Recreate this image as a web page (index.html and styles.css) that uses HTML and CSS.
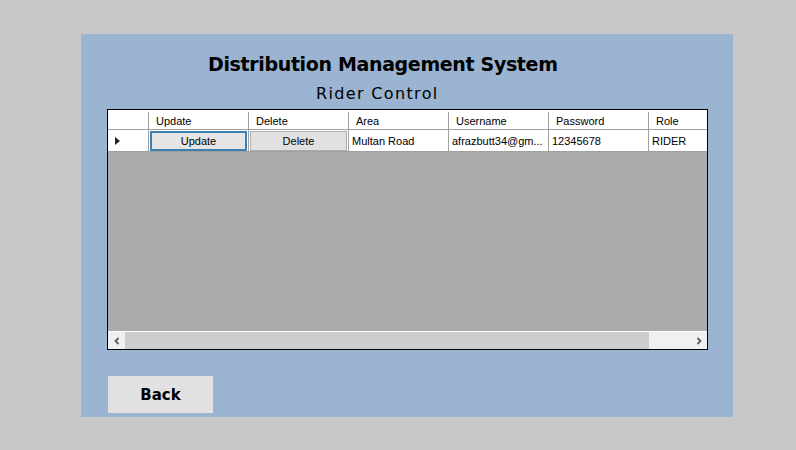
FILE: index.html
```html
<!DOCTYPE html>
<html>
<head>
<meta charset="utf-8">
<link rel="stylesheet" href="styles.css">
</head>
<body>
<div class="panel">
  <div class="titles">
    <h1 class="title">Distribution Management System</h1>
    <div class="subtitle">Rider Control</div>
  </div>
  <div class="grid">
    <div class="row head">
      <div class="cell rh"></div>
      <div class="cell c">Update</div>
      <div class="cell c">Delete</div>
      <div class="cell c">Area</div>
      <div class="cell c">Username</div>
      <div class="cell c">Password</div>
      <div class="cell c last">Role</div>
    </div>
    <div class="row data">
      <div class="cell rh"><span class="tri"></span></div>
      <div class="cell c btncell"><span class="gbtn focus">Update</span></div>
      <div class="cell c btncell"><span class="gbtn">Delete</span></div>
      <div class="cell c">Multan Road</div>
      <div class="cell c">afrazbutt34@gm...</div>
      <div class="cell c">12345678</div>
      <div class="cell c last">RIDER</div>
    </div>
    <div class="empty"></div>
    <div class="hscroll">
      <span class="arrow">
        <svg width="8" height="8" viewBox="0 0 8 8"><path d="M5.5 1 L2.5 4 L5.5 7" fill="none" stroke="#606060" stroke-width="1.8"/></svg>
      </span>
      <div class="track"><div class="thumb"></div></div>
      <span class="arrow">
        <svg width="8" height="8" viewBox="0 0 8 8"><path d="M2.5 1 L5.5 4 L2.5 7" fill="none" stroke="#606060" stroke-width="1.8"/></svg>
      </span>
    </div>
  </div>
  <div class="footer">
    <button class="back">Back</button>
  </div>
</div>
</body>
</html>
```
FILE: styles.css
```css
html, body {
  margin: 0;
  padding: 0;
  background: #c8c8c8;
}
body {
  width: 796px;
  height: 450px;
  overflow: hidden;
  font-family: "Liberation Sans", Arial, sans-serif;
}
.panel {
  margin: 34px 0 0 81px;
  width: 652px;
  height: 383px;
  background: #9ab4d1;
  box-sizing: border-box;
  padding: 17px 0 0 26px;
  display: flex;
  flex-direction: column;
}
.titles {
  width: 600px;
  display: flex;
  flex-direction: column;
  align-items: flex-start;
}
.title {
  margin: 0 0 0 101px;
  font-family: "DejaVu Sans", Verdana, sans-serif;
  font-weight: bold;
  font-size: 19px;
  line-height: 26px;
  color: #000;
  letter-spacing: -0.35px;
}
.subtitle {
  margin: 8px 0 0 209px;
  font-family: "DejaVu Sans", sans-serif;
  font-size: 16px;
  line-height: 18px;
  color: #000;
  letter-spacing: 1.35px;
}
.grid {
  margin-top: 6px;
  width: 601px;
  height: 241px;
  box-sizing: border-box;
  border: 1px solid #000;
  background: #ababab;
  display: flex;
  flex-direction: column;
  overflow: hidden;
}
.row {
  display: flex;
  background: #fff;
  font-size: 11px;
  color: #000;
}
.row.head {
  height: 20px;
  border-bottom: 1px solid #a0a0a0;
  padding-top: 2px;
  box-sizing: border-box;
}
.row.data {
  height: 22px;
  border-bottom: 1px solid #a0a0a0;
  box-sizing: border-box;
}
.cell {
  box-sizing: border-box;
  border-right: 1px solid #a0a0a0;
  display: flex;
  align-items: center;
  white-space: nowrap;
  overflow: hidden;
}
.row.data .cell {
  padding-top: 1px;
}
.cell.rh {
  width: 41px;
  flex: none;
  padding-left: 7px;
}
.cell.c {
  width: 100px;
  flex: none;
  padding-left: 3px;
}
.row.head .cell.c {
  padding-left: 7px;
}
.cell.last {
  flex: 1;
  border-right: none;
}
.tri {
  width: 0;
  height: 0;
  border-top: 4px solid transparent;
  border-bottom: 4px solid transparent;
  border-left: 5px solid #222;
}
.row.data .cell.btncell {
  padding: 1px;
}
.gbtn {
  flex: 1;
  height: 20px;
  box-sizing: border-box;
  border: 1px solid #adadad;
  background: #e1e1e1;
  display: flex;
  align-items: center;
  justify-content: center;
  padding-top: 1px;
}
.gbtn.focus {
  border: 2px solid #3c7fb1;
  background: #e5e5e5;
}
.empty {
  flex: 1;
}
.hscroll {
  height: 17px;
  display: flex;
  align-items: center;
  background: #f0f0f0;
  border-top: 1px solid #fff;
}
.arrow {
  width: 17px;
  height: 17px;
  flex: none;
  display: flex;
  align-items: center;
  justify-content: center;
}
.track {
  flex: 1;
  height: 17px;
  display: flex;
}
.thumb {
  width: 524px;
  height: 17px;
  background: #cdcdcd;
}
.footer {
  margin-top: 26px;
  display: flex;
}
.back {
  margin: 0 0 0 1px;
  width: 105px;
  height: 37px;
  border: none;
  background: #e1e1e1;
  font-family: "DejaVu Sans", Tahoma, sans-serif;
  font-weight: bold;
  font-size: 15px;
  color: #000;
  padding: 0;
}
```
